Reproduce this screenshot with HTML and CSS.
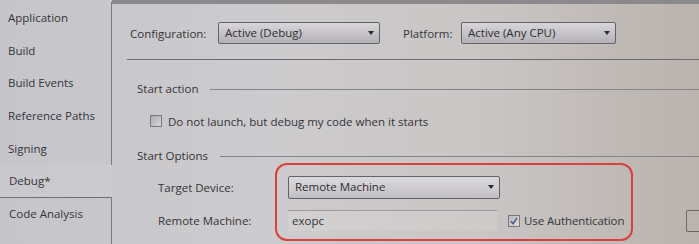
FILE: index.html
```html
<!DOCTYPE html>
<html lang="en">
<head>
  <meta charset="UTF-8" />
  <title>Debug properties</title>
  <link rel="stylesheet" href="styles.css">
</head>
<body>
  <div class="window">
    <div class="tabs">
      <div class="tab">Application</div>
      <div class="tab">Build</div>
      <div class="tab">Build Events</div>
      <div class="tab">Reference Paths</div>
      <div class="tab">Signing</div>
      <div class="tab active">Debug*</div>
      <div class="tab after">Code Analysis</div>
    </div>

    <div class="page">
      <div class="config-row">
        <span class="cfg-label">Configuration:</span>
        <div class="combo combo-config">Active (Debug)<span class="arrow"></span></div>
        <span class="cfg-label platform">Platform:</span>
        <div class="combo combo-platform">Active (Any CPU)<span class="arrow"></span></div>
      </div>
      <div class="rule"></div>

      <div class="group-title first">Start action</div>
      <label class="check-row">
        <span class="checkbox"></span>
        Do not launch, but debug my code when it starts
      </label>

      <div class="group-title second">Start Options</div>
      <div class="options">
        <div class="opt-row">
          <span class="opt-label">Target Device:</span>
          <div class="combo combo-device">Remote Machine<span class="arrow"></span></div>
        </div>
        <div class="opt-row">
          <span class="opt-label">Remote Machine:</span>
          <div class="textbox">exopc</div>
          <span class="checkbox checked">
            <svg width="10" height="10" viewBox="0 0 10 10"><path d="M2 5.2 L4 7.6 L8 2" fill="none" stroke="#4a5f86" stroke-width="1.6"/></svg>
          </span>
          <span class="auth">Use Authentication</span>
          <div class="find-btn"></div>
        </div>
        <div class="highlight"></div>
      </div>
    </div>
  </div>
</body>
</html>
```

FILE: styles.css
```css
* {
  margin: 0;
  padding: 0;
  box-sizing: border-box;
}

body {
  width: 699px;
  height: 244px;
  overflow: hidden;
  font-family: "Open Sans", "Noto Sans", sans-serif;
  font-size: 11.5px;
  color: #34343a;
  background: linear-gradient(90deg, #c6c5ca 0%, #cdcbcd 40%, #c9c5c4 70%, #bab3ae 100%);
}

.window {
  display: flex;
  height: 244px;
}

/* left tab strip */
.tabs {
  width: 112px;
  padding-top: 2px;
  flex-shrink: 0;
}

.tab {
  height: 32.7px;
  line-height: 32px;
  padding-left: 8px;
  border-right: 1px solid #7b7a82;
  white-space: nowrap;
}

.tab.active {
  border-right: none;
  background: rgba(255, 255, 255, 0.06);
  padding-left: 9px;
}

.tab.after {
  border-top: 1px solid #6f6e76;
  padding-left: 9px;
  height: 48px;
  margin-top: -1px;
}

/* page */
.page {
  flex: 1;
  position: relative;
  border-top: 4px solid #8c898d;
  padding-left: 18px;
}

.config-row {
  display: flex;
  align-items: center;
  margin-top: 18px;
  height: 22px;
}

.cfg-label {
  width: 88px;
}

.cfg-label.platform {
  margin-left: 23px;
  width: 58px;
}

.combo {
  position: relative;
  height: 22px;
  line-height: 20px;
  padding-left: 6px;
  border: 1px solid #646368;
  border-radius: 2px;
  background: linear-gradient(180deg, #d8d6d8 0%, #c4c2c6 55%, #b3b1b6 100%);
  color: #2e2e33;
}

.combo-config {
  width: 162px;
}

.combo-platform {
  width: 155px;
}

.arrow {
  position: absolute;
  right: 5px;
  top: 8px;
  border-left: 3.5px solid transparent;
  border-right: 3.5px solid transparent;
  border-top: 4px solid #2c2c30;
}

.rule {
  height: 1px;
  background: #6d6b70;
  margin: 15px 0 0 -3px;
}

.group-title {
  display: flex;
  align-items: center;
  padding-left: 7px;
  height: 16px;
}

.group-title::after {
  content: "";
  flex: 1;
  height: 1px;
  background: #85838a;
  margin-left: 12px;
  margin-top: 2px;
}

.group-title.first {
  margin-top: 20px;
}

.group-title.second {
  margin-top: 18px;
}

.check-row {
  display: flex;
  align-items: center;
  gap: 6px;
  margin: 17px 0 0 20px;
  height: 16px;
}

.checkbox {
  display: inline-flex;
  align-items: center;
  justify-content: center;
  width: 12px;
  height: 12px;
  border: 1px solid #7a787e;
  background: linear-gradient(135deg, #aeacb2, #d8d6da);
}

.options {
  position: relative;
  padding-left: 28px;
  padding-top: 13px;
}

.opt-row {
  display: flex;
  align-items: center;
  height: 23px;
}

.opt-row + .opt-row {
  margin-top: 10px;
}

.opt-label {
  width: 130px;
}

.combo-device {
  width: 212px;
  height: 23px;
  background: linear-gradient(180deg, #dad8da 0%, #cdcbce 60%, #c1bfc3 100%);
}

.textbox {
  width: 209px;
  height: 21px;
  line-height: 20px;
  padding-left: 4px;
  border-top: 1px solid #9c9aa0;
  background: rgba(255, 255, 255, 0.1);
  margin-right: 11px;
}

.checkbox.checked {
  background: linear-gradient(135deg, #b9b8bd, #dedcdf);
}

.auth {
  margin-left: 4px;
  letter-spacing: -0.1px;
}

.find-btn {
  margin-left: auto;
  width: 13px;
  height: 22px;
  border: 1px solid #6a676a;
  border-right: none;
  border-radius: 2px 0 0 2px;
}

/* red annotation drawn over the options */
.highlight {
  position: absolute;
  left: 145px;
  top: 0;
  width: 358px;
  height: 78px;
  border: 2px solid #dc3f3c;
  border-radius: 12px;
}
```
